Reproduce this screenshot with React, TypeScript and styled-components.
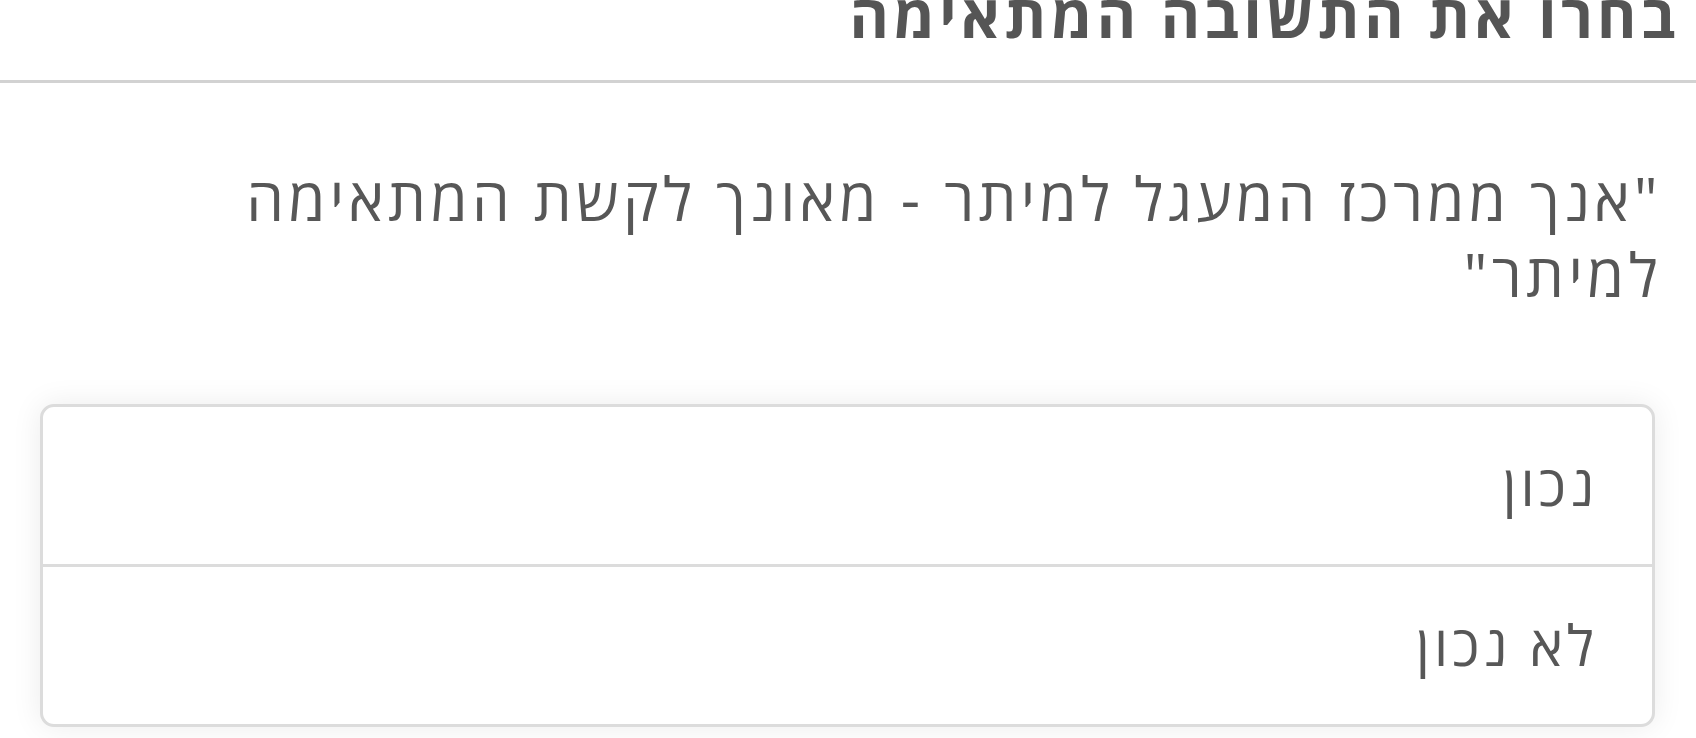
import { createGlobalStyle } from 'styled-components'
import styled from 'styled-components'

const GlobalStyle = createGlobalStyle`
  html, body {
    margin: 0;
    padding: 0;
    background: #ffffff;
  }
  body {
    font-family: 'Open Sans', 'DejaVu Sans', sans-serif;
    color: #575757;
    overflow: hidden;
  }
`

interface Option {
  id: string
  label: string
}

const options: Option[] = [
  { id: 'true', label: 'נכון' },
  { id: 'false', label: 'לא נכון' },
]

const App = () => {
  return (
    <Page dir='rtl'>
      <GlobalStyle />
      {/* Header */}
      <Header>
        <Title>בחרו את התשובה המתאימה</Title>
      </Header>

      {/* Question body */}
      <Body>
        <Question>"אנך ממרכז המעגל למיתר - מאונך לקשת המתאימה למיתר"</Question>

        <OptionList>
          {options.map((option) => (
            <OptionRow key={option.id}>{option.label}</OptionRow>
          ))}
        </OptionList>
      </Body>
    </Page>
  )
}

export default App

const Page = styled.div`
  width: 100%;
  min-height: 738px;
  background: #ffffff;
`

const Header = styled.header`
  height: 80px;
  display: flex;
  align-items: flex-end;
  padding: 0 16px 0 0;
  border-bottom: 3px solid #d2d2d2;
  overflow: hidden;
`

const Title = styled.h2`
  margin: 0 0 35px 0;
  font-size: 60px;
  line-height: 60px;
  font-weight: 700;
  letter-spacing: 4.45px;
  color: #555555;
  white-space: nowrap;
`

const Body = styled.main`
  padding: 0 34px 0 40px;
`

const Question = styled.p`
  margin: 0;
  padding: 77px 0 0 120px;
  font-size: 60px;
  line-height: 76px;
  font-weight: 500;
  letter-spacing: 4.3px;
  color: #575757;
`

const OptionList = styled.div`
  margin: 92px 7px 0 0;
  border: 3px solid #dcdcdc;
  border-radius: 14px;
  background: #ffffff;
  box-shadow: 0 0 30px rgba(0, 0, 0, 0.08);
  overflow: hidden;
`

const OptionRow = styled.div`
  height: 157px;
  display: flex;
  align-items: center;
  padding: 0 54px 4px 24px;
  box-sizing: border-box;
  font-size: 56px;
  font-weight: 500;
  letter-spacing: 4px;
  color: #575757;

  & + & {
    height: 160px;
    border-top: 3px solid #dcdcdc;
  }
`
